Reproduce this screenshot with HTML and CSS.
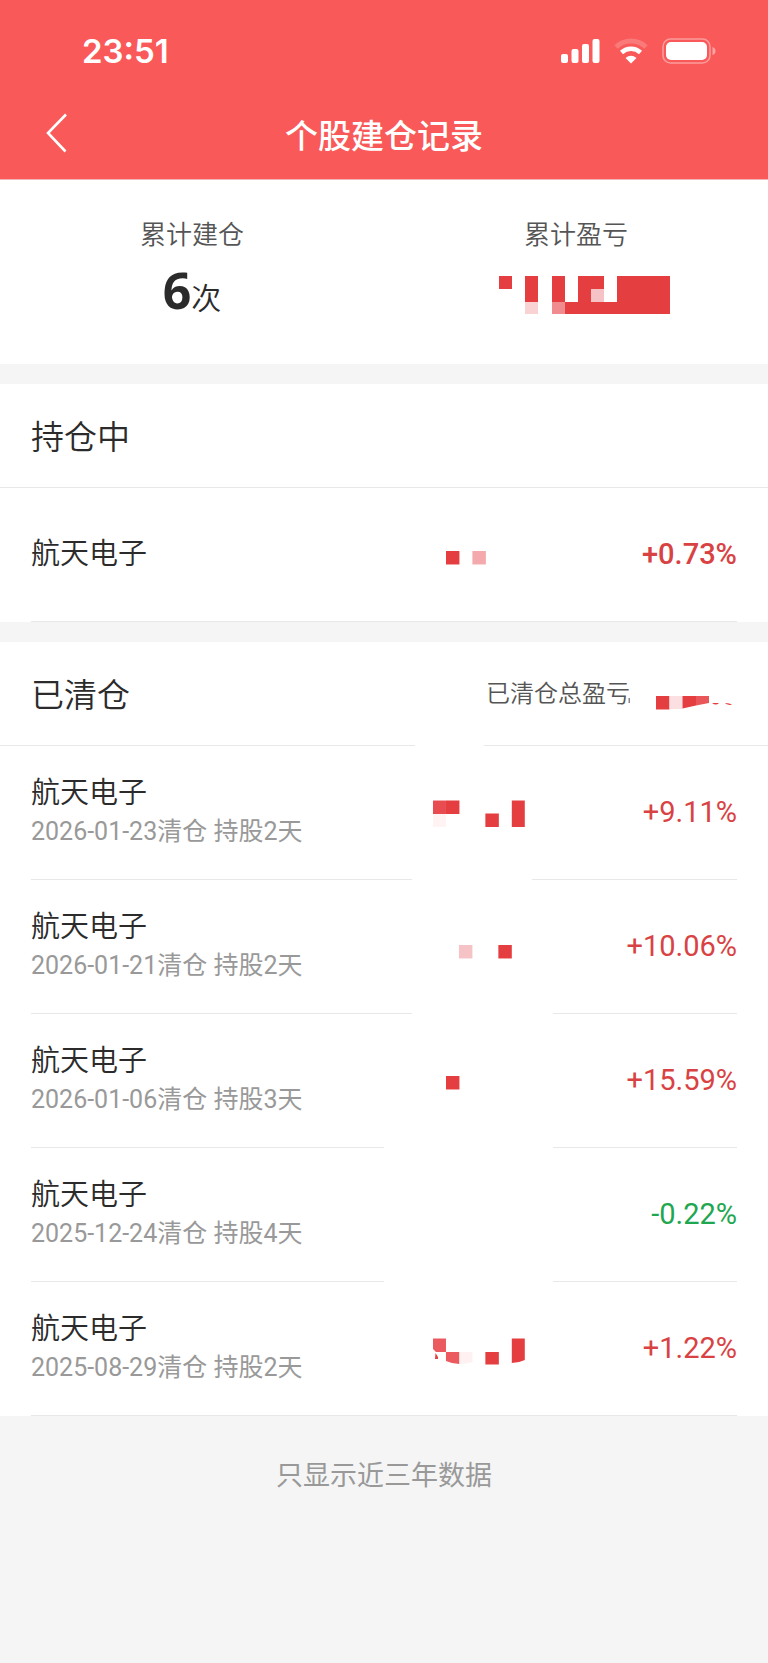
FILE: index.html
```html
<!DOCTYPE html>
<html lang="zh-CN">
<head>
<meta charset="utf-8">
<meta name="viewport" content="width=device-width, initial-scale=1">
<title>个股建仓记录</title>
<link rel="stylesheet" href="styles.css">
</head>
<body>
<header class="header">
  <div class="status">
    <time class="clock">23:51</time>
    <div class="status-icons">
      <svg width="39" height="26" viewBox="0 0 39 26" fill="#fff" aria-hidden="true">
        <rect x="0" y="16" width="7" height="9" rx="2"/><rect x="10.500" y="11" width="7" height="14" rx="2"/><rect x="21" y="6" width="7" height="19" rx="2"/><rect x="31.500" y="1" width="7" height="24" rx="2"/>
      </svg>
      <svg width="34" height="26" viewBox="0 0 34 26" fill="none" aria-hidden="true">
        <path d="M2 9 A22 22 0 0 1 32 9" stroke="#fff" stroke-opacity=".2" stroke-width="5"/>
        <path d="M7.500 14.500 A14 14 0 0 1 26.500 14.500" stroke="#fff" stroke-width="4.500"/>
        <path d="M17 25.500 L11.500 20 Q17 15.600 22.500 20 Z" fill="#fff"/>
      </svg>
      <svg width="54" height="26" viewBox="0 0 54 26" aria-hidden="true">
        <rect x="1" y="1" width="47" height="24" rx="7.500" fill="none" stroke="#fff" stroke-opacity=".4" stroke-width="1.600"/>
        <rect x="4" y="4" width="41" height="18" rx="5" fill="#fff"/>
        <path d="M50.500 9 Q53.500 10 53.500 13 Q53.500 16 50.500 17 Z" fill="#fff" fill-opacity=".45"/>
      </svg>
    </div>
  </div>
  <nav class="nav">
    <button class="back" type="button" aria-label="返回">
      <svg width="22" height="40" viewBox="0 0 22 40" fill="none" stroke="#fff" stroke-width="2.600" aria-hidden="true"><path d="M20 1.500 L2 20 L19.500 38.500"/></svg>
    </button>
    <h1 class="title">个股建仓记录</h1>
  </nav>
</header>

<main>
  <section class="summary">
    <div class="stat">
      <span class="stat-label">累计建仓</span>
      <span class="stat-value"><b class="stat-number">6</b>次</span>
    </div>
    <div class="stat">
      <span class="stat-label">累计盈亏</span>
      <svg class="stat-mosaic" width="188" height="40" viewBox="0 0 188 40" fill="#e53e40" shape-rendering="crispEdges" aria-hidden="true">
        <path d="M17 1h13v13H17zM43 1h13v26H43zM69.500 1h13v26h-13zM96 1h26v13h-13v13h26V1h53v38H82.500V27H96z"/>
        <rect x="43" y="27" width="13" height="12" fill="#f9d2d4"/><rect x="69.500" y="27" width="13" height="12" fill="#f08b8f"/><rect x="109" y="14" width="13" height="13" fill="#f5c3c6"/>
      </svg>
    </div>
  </section>

  <section class="group">
    <div class="group-head"><h2 class="group-title">持仓中</h2></div>
    <div class="line"></div>
    <ul class="list">
      <li>
        <div class="row">
          <div class="stock"><span class="name">航天电子</span></div>
          <svg class="mosaic" viewBox="0 0 92 133" fill="#e53e40" aria-hidden="true"><path d="M13 63h13.500v13.500H13z"/><path fill="#f4aaad" d="M39.500 63H53v13.500H39.500z"/></svg>
          <span class="rate rate-strong">+0.73%</span>
        </div>
        <div class="line line-inset"></div>
      </li>
    </ul>
  </section>

  <section class="group">
    <div class="group-head">
      <h2 class="group-title">已清仓</h2>
      <div class="total">
        <span class="total-label">已清仓总盈亏</span>
        <svg class="total-mosaic" width="113" height="36" viewBox="0 0 113 36" fill="#e53e40" aria-hidden="true">
          <path d="M4.500 22H6v5H4.500z" fill="#888"/>
          <path d="M32 20h13.500v13.500H32z"/><path fill="#fbdfe1" d="M45.500 20h13v13h-13z"/><path d="M58.500 20H72v9.500l-13.500 3z"/><path fill="#e9575b" d="M72 20h13v7l-13 2.500z"/>
          <path d="M88 27h7q-3 3-7 0zM101 27q5 0 7 2-5 0-7-2z"/>
        </svg>
      </div>
    </div>
    <div class="line cut-head"></div>
    <ul class="list">
      <li>
        <div class="row">
          <div class="stock"><span class="name">航天电子</span><span class="meta">2026-01-23清仓 持股2天</span></div>
          <svg class="mosaic" viewBox="0 0 92 133" fill="#e53e40" aria-hidden="true"><path fill="#e84c51" d="M0 54.500h13V68H0z"/><path d="M13 54.500h13.500V68H13zM52.500 67.500h13.500v13.500H52.500zM79 54.500h13V81H79z"/><path fill="#fff3f3" d="M0 68h13v13H0z"/></svg>
          <span class="rate">+9.11%</span>
        </div>
        <div class="line line-inset cut-a"></div>
      </li>
      <li>
        <div class="row">
          <div class="stock"><span class="name">航天电子</span><span class="meta">2026-01-21清仓 持股2天</span></div>
          <svg class="mosaic" viewBox="0 0 92 133" fill="#e53e40" aria-hidden="true"><path fill="#f5c3c5" d="M26 65h13.500v13.500H26z"/><path d="M65.500 65H79v13.500H65.500z"/></svg>
          <span class="rate">+10.06%</span>
        </div>
        <div class="line line-inset cut-b"></div>
      </li>
      <li>
        <div class="row">
          <div class="stock"><span class="name">航天电子</span><span class="meta">2026-01-06清仓 持股3天</span></div>
          <svg class="mosaic" viewBox="0 0 92 133" fill="#e53e40" aria-hidden="true"><path d="M13 62h13.500v13.500H13z"/></svg>
          <span class="rate">+15.59%</span>
        </div>
        <div class="line line-inset cut-c"></div>
      </li>
      <li>
        <div class="row">
          <div class="stock"><span class="name">航天电子</span><span class="meta">2025-12-24清仓 持股4天</span></div>
          <span class="mosaic"></span>
          <span class="rate rate-down">-0.22%</span>
        </div>
        <div class="line line-inset cut-c"></div>
      </li>
      <li>
        <div class="row">
          <div class="stock"><span class="name">航天电子</span><span class="meta">2025-08-29清仓 持股2天</span></div>
          <svg class="mosaic" viewBox="0 0 92 133" fill="#e53e40" aria-hidden="true"><path fill="#ea5a5e" d="M0 56.500h13V70H3L0 67zM13 70h13.500v12q-7 0-13.500-3z"/><path fill="#fff0f1" d="M26.500 70h13v10q-6 2-13 2z"/><path d="M2.500 71l2.500 4v2H2zM52.500 70h13.500v12.500H52.500zM79 56.500h13V78q-6 3-13 3z"/></svg>
          <span class="rate">+1.22%</span>
        </div>
        <div class="line line-inset"></div>
      </li>
    </ul>
  </section>
</main>
<footer class="footer">只显示近三年数据</footer>
</body>
</html>
```
FILE: styles.css
```css
* { box-sizing: border-box; }
body {
  margin: 0;
  background: #f5f5f5;
  color: #2b2b2b;
  font-family: Roboto, "Noto Sans CJK SC", sans-serif;
}
h1, h2 { margin: 0; font-weight: 400; }
svg { display: block; }

.header { background: #f95959; color: #fff; border-bottom: 1px solid #f0b4b4; }
.status {
  display: flex;
  align-items: center;
  justify-content: space-between;
  height: 93px;
  padding: 9px 52px 0 82px;
}
.clock { font: 600 33px/40px Inter, sans-serif; }
.status-icons { display: flex; align-items: center; gap: 14px; }
.nav {
  display: grid;
  grid-template-columns: 1fr auto 1fr;
  align-items: center;
  height: 86px;
}
.back {
  justify-self: start;
  margin: 0 0 6px;
  padding: 0 46px;
  border: 0;
  background: none;
  cursor: pointer;
}
.title { padding-top: 2px; font-size: 33px; line-height: 48px; font-weight: 500; }

.summary {
  display: grid;
  grid-template-columns: 1fr 1fr;
  padding: 36px 0 34px;
  background: #fff;
}
.stat { display: flex; flex-direction: column; align-items: center; }
.stat-label { font-size: 26px; line-height: 38px; font-weight: 350; color: #555; }
.stat-value {
  display: flex;
  align-items: baseline;
  height: 76px;
  font-size: 30px;
  line-height: 68px;
  font-weight: 350;
}
.stat-number { font: 700 50px/72px "Noto Sans", sans-serif; }
.stat-mosaic { margin-top: 21px; }

.group { margin-top: 20px; background: #fff; }
.group-head {
  display: flex;
  align-items: center;
  justify-content: space-between;
  height: 103px;
  padding: 0 31px;
}
.group-title { padding-top: 5px; font-size: 33px; line-height: 48px; font-weight: 350; }
.total { display: flex; align-items: center; }
.total-label { font-size: 24px; line-height: 36px; font-weight: 350; color: #555; }
.total-mosaic { margin-left: -6px; }

.line {
  --cut-start: 50%;
  --cut-end: 50%;
  height: 1px;
  background: linear-gradient(to right, #e8e8e8 var(--cut-start), #fff var(--cut-start), #fff var(--cut-end), #e8e8e8 var(--cut-end));
}
.line-inset { margin: 0 31px; }
.cut-head { --cut-start: 54%; --cut-end: 63%; }
.cut-a { --cut-start: 54%; --cut-end: 71%; }
.cut-b { --cut-start: 54%; --cut-end: 74%; }
.cut-c { --cut-start: 50%; --cut-end: 74%; }

.list { margin: 0; padding: 0; list-style: none; }
.row {
  display: grid;
  grid-template-columns: 57fr 13fr 30fr;
  align-items: center;
  height: 133px;
  padding: 0 31px;
}
.stock { display: flex; flex-direction: column; padding-bottom: 2px; }
.name { font-size: 29px; line-height: 40px; font-weight: 350; }
.meta { font-size: 25px; line-height: 38px; color: #999; }
.mosaic { width: 100%; height: 133px; }
.rate { padding-bottom: 2px; font-size: 29px; line-height: 40px; text-align: right; color: #d94243; }
.rate-strong { font-weight: 500; }
.rate-down { color: #1ea750; }

.footer { padding: 40px 0; text-align: center; font-size: 27px; line-height: 40px; color: #999; }
```
